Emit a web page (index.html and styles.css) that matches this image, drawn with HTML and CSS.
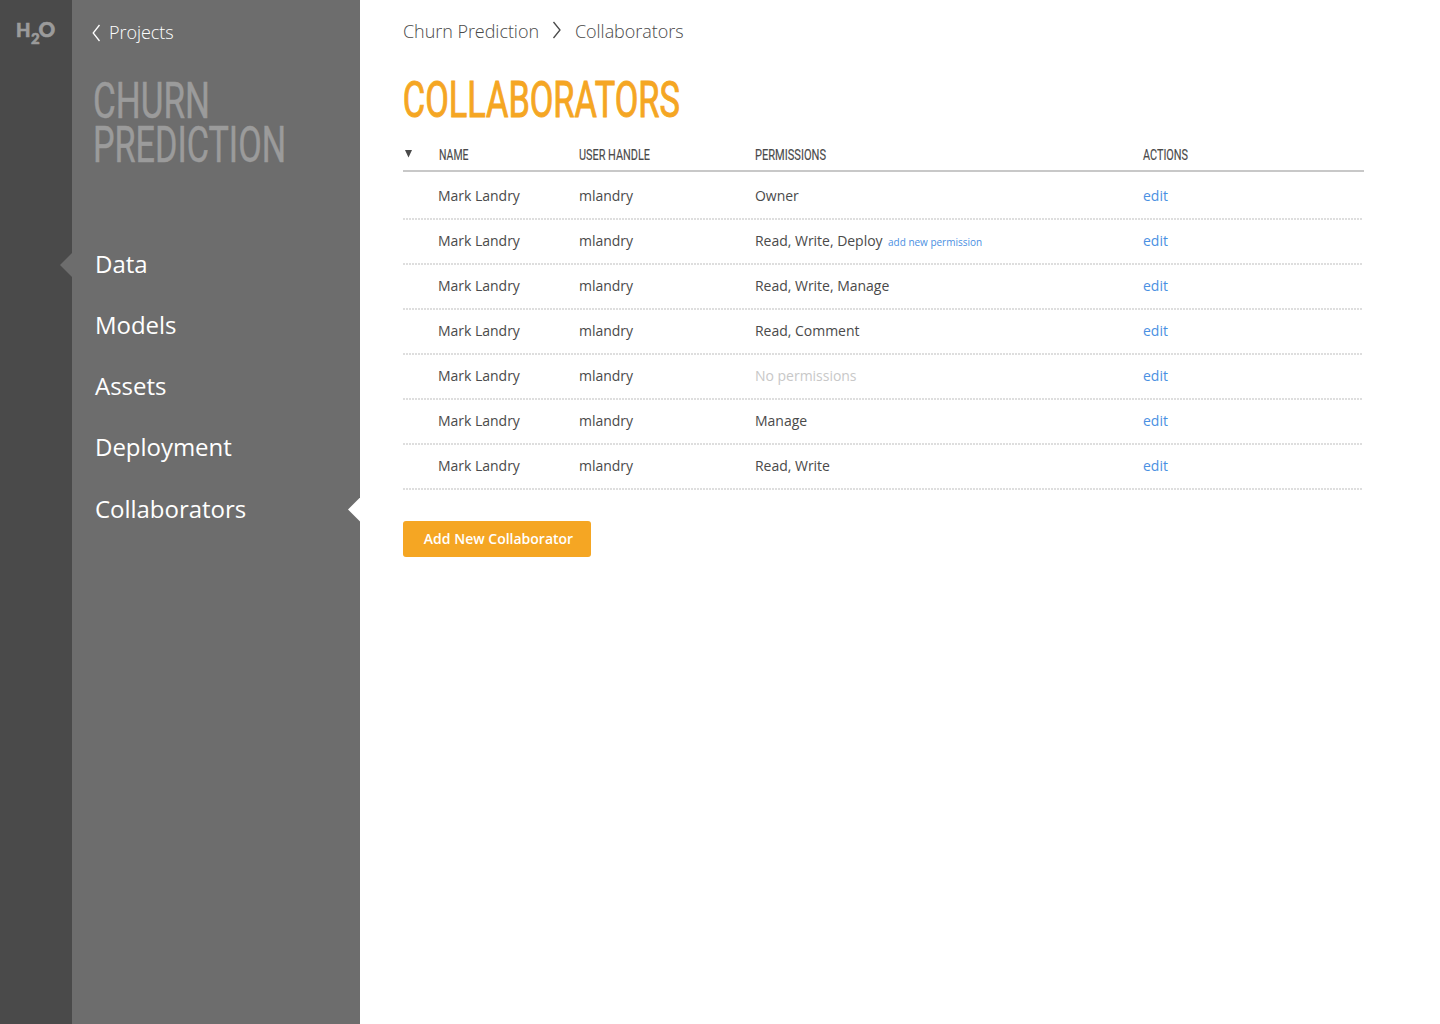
FILE: index.html
```html
<!DOCTYPE html>
<html lang="en">
<head>
<meta charset="utf-8">
<title>Collaborators</title>
<link rel="stylesheet" href="styles.css">
</head>
<body>
<div class="app">
  <aside class="rail">
    <svg class="logo" width="40" height="26" viewBox="0 0 40 26"><text class="logo-big" x="0" y="17" textLength="14.500" lengthAdjust="spacingAndGlyphs">H</text><text class="logo-sub" x="15" y="23.500">2</text><text class="logo-round" x="22.500" y="17.300" textLength="16.700" lengthAdjust="spacingAndGlyphs">O</text></svg>
    <span class="rail-arrow"></span>
  </aside>
  <nav class="sidebar">
    <a class="back"><svg width="9" height="18" viewBox="0 0 9 18"><path d="M7.500 1 1.200 9l6.300 8"/></svg><span>Projects</span></a>
    <h2 class="project">
      <svg width="194" height="44"><text class="display" x="0" y="39" textLength="117" lengthAdjust="spacingAndGlyphs">CHURN</text></svg>
      <svg width="194" height="44"><text class="display" x="0" y="39" textLength="193" lengthAdjust="spacingAndGlyphs">PREDICTION</text></svg>
    </h2>
    <ul class="menu">
      <li>Data</li><li>Models</li><li>Assets</li><li>Deployment</li><li class="active">Collaborators</li>
    </ul>
  </nav>
  <main class="content">
    <div class="crumbs"><span>Churn Prediction</span><svg width="10" height="18" viewBox="0 0 10 18"><path d="M1.500 1 8 9l-6.500 8"/></svg><span>Collaborators</span></div>
    <h1 class="title"><svg width="280" height="44"><text class="display" x="-.2" y="39.300" textLength="277" lengthAdjust="spacingAndGlyphs">COLLABORATORS</text></svg></h1>
    <div class="table">
      <div class="row head">
        <svg class="sort" width="7" height="8"><path d="M0 0h7L3.500 7.500z"/></svg>
        <svg class="name" width="32" height="16"><text class="label" x="0" y="14" textLength="29.500" lengthAdjust="spacingAndGlyphs">NAME</text></svg>
        <svg width="74" height="16"><text class="label" x="0" y="14" textLength="71" lengthAdjust="spacingAndGlyphs">USER HANDLE</text></svg>
        <svg width="74" height="16"><text class="label" x="0" y="14" textLength="71" lengthAdjust="spacingAndGlyphs">PERMISSIONS</text></svg>
        <svg width="48" height="16"><text class="label" x="0" y="14" textLength="45" lengthAdjust="spacingAndGlyphs">ACTIONS</text></svg>
      </div>
      <div class="row"><i></i><span>Mark Landry</span><span>mlandry</span><span>Owner</span><a>edit</a></div>
      <div class="row"><i></i><span>Mark Landry</span><span>mlandry</span><span>Read, Write, Deploy<a class="add">add new permission</a></span><a>edit</a></div>
      <div class="row"><i></i><span>Mark Landry</span><span>mlandry</span><span>Read, Write, Manage</span><a>edit</a></div>
      <div class="row"><i></i><span>Mark Landry</span><span>mlandry</span><span>Read, Comment</span><a>edit</a></div>
      <div class="row"><i></i><span>Mark Landry</span><span>mlandry</span><span class="none">No permissions</span><a>edit</a></div>
      <div class="row"><i></i><span>Mark Landry</span><span>mlandry</span><span>Manage</span><a>edit</a></div>
      <div class="row"><i></i><span>Mark Landry</span><span>mlandry</span><span>Read, Write</span><a>edit</a></div>
    </div>
    <button class="button">Add New Collaborator</button>
  </main>
</div>
</body>
</html>
```
FILE: styles.css
```css
* { box-sizing: border-box; }
body { margin: 0; background: #fff; color: #4a4a4a; font-family: "Open Sans", sans-serif; }
svg { display: block; flex: none; overflow: visible; }
.app { display: flex; height: 1024px; }
.rail { position: relative; width: 72px; background: #4a4a4a; padding: 20px 0 0 16px; }
.logo { fill: #9b9b9b; stroke: #9b9b9b; stroke-width: .6; font-family: Lato, sans-serif; font-weight: 900; }
.logo-big { font-size: 19px; }
.logo-round { font-size: 20px; }
.logo-sub { font-size: 15px; }
.rail-arrow { position: absolute; right: 0; top: 253px; width: 12px; height: 24px; background: #6d6d6d; clip-path: polygon(100% 0, 0 50%, 100% 100%); }
.sidebar { width: 288px; background: #6d6d6d; color: #fff; padding: 20px 0 0 20px; }
.back { display: flex; align-items: center; gap: 8px; height: 25px; font-size: 18px; font-weight: 300; letter-spacing: -.04px; }
.back span, .crumbs span { margin-top: -2px; }
.back svg, .crumbs svg { fill: none; stroke: currentColor; stroke-width: 1.3; }
.project { margin: 34px 0 0 1px; fill: #9b9b9b; stroke: #9b9b9b; stroke-width: .5; }
.display { font-family: Roboto, sans-serif; font-size: 50px; font-weight: 400; }
.menu { list-style: none; margin: 66px 0 0; padding: 0 0 0 3px; font-size: 24px; letter-spacing: -.03px; }
.menu li { position: relative; height: 61.15px; line-height: 61px; }
.active::after { content: ""; position: absolute; right: 0; top: 20px; width: 12px; height: 24px; background: #fff; clip-path: polygon(100% 0, 0 50%, 100% 100%); }
.content { padding: 19px 0 0 43px; }
.crumbs { display: flex; align-items: center; height: 25px; font-size: 18px; font-weight: 300; letter-spacing: -.05px; }
.crumbs svg { margin: -3px 13px 0; }
.title { margin: 34px 0 0; fill: #f5a623; stroke: #f5a623; stroke-width: 1; }
.table { width: 960px; margin-top: 24px; font-size: 14px; letter-spacing: -.02px; }
.row { display: grid; grid-template-columns: 35px 141px 176px 388px 1fr; height: 45px; line-height: 41px; background: repeating-linear-gradient(90deg, #dedede 0 2px, #fff 2px 3px) bottom / 100% 2px no-repeat; }
.row a { color: #4a90e2; }
.row .add { margin-left: 5.5px; font-size: 10px; }
.row .none { color: #c8c8c8; }
.head { height: 26px; margin-bottom: 3px; background: none; border-bottom: 2px solid #c8c8c8; width: 960.5px; fill: #4a4a4a; letter-spacing: 0; }
.sort { margin: 4px 0 0 2px; }
.name { margin-left: 1px; }
.label { font-family: Roboto, sans-serif; font-size: 15px; stroke: #4a4a4a; stroke-width: .15; }
.button { width: 188px; height: 36px; margin-top: 31px; padding: 0 0 0 3px; border: 0; border-radius: 3px; background: #f5a623; color: #fff; font: 600 14px/36px "Open Sans", sans-serif; }
```
